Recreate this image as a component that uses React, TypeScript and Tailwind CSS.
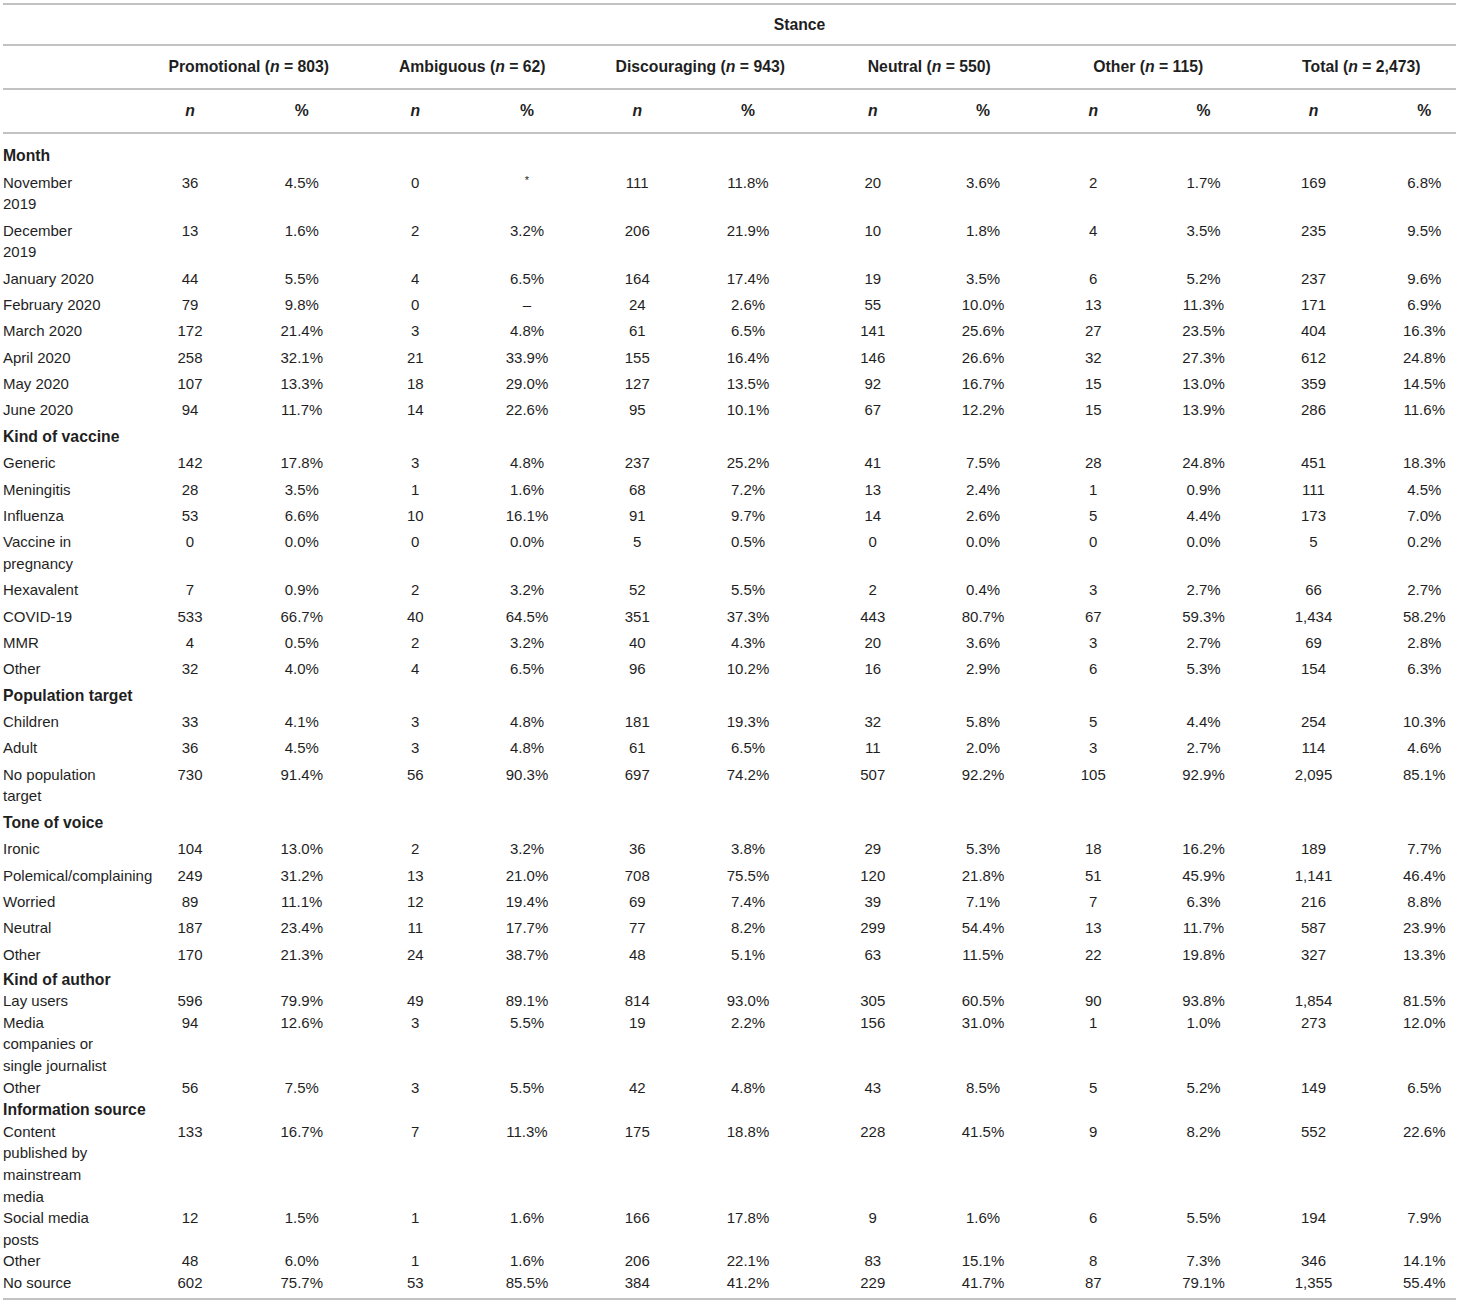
type Row = { label: string; vals: string[]; nowrap?: boolean };
type Section = { title: string; compact?: boolean; rows: Row[] };

const r = (label: string, s: string, nowrap?: boolean): Row => ({ label, vals: s.split(" "), nowrap });

const sections: Section[] = [
  {
    title: "Month",
    rows: [
      r("November 2019", "36 4.5% 0 * 111 11.8% 20 3.6% 2 1.7% 169 6.8%"),
      r("December 2019", "13 1.6% 2 3.2% 206 21.9% 10 1.8% 4 3.5% 235 9.5%"),
      r("January 2020", "44 5.5% 4 6.5% 164 17.4% 19 3.5% 6 5.2% 237 9.6%"),
      r("February 2020", "79 9.8% 0 – 24 2.6% 55 10.0% 13 11.3% 171 6.9%"),
      r("March 2020", "172 21.4% 3 4.8% 61 6.5% 141 25.6% 27 23.5% 404 16.3%"),
      r("April 2020", "258 32.1% 21 33.9% 155 16.4% 146 26.6% 32 27.3% 612 24.8%"),
      r("May 2020", "107 13.3% 18 29.0% 127 13.5% 92 16.7% 15 13.0% 359 14.5%"),
      r("June 2020", "94 11.7% 14 22.6% 95 10.1% 67 12.2% 15 13.9% 286 11.6%"),
    ],
  },
  {
    title: "Kind of vaccine",
    rows: [
      r("Generic", "142 17.8% 3 4.8% 237 25.2% 41 7.5% 28 24.8% 451 18.3%"),
      r("Meningitis", "28 3.5% 1 1.6% 68 7.2% 13 2.4% 1 0.9% 111 4.5%"),
      r("Influenza", "53 6.6% 10 16.1% 91 9.7% 14 2.6% 5 4.4% 173 7.0%"),
      r("Vaccine in pregnancy", "0 0.0% 0 0.0% 5 0.5% 0 0.0% 0 0.0% 5 0.2%"),
      r("Hexavalent", "7 0.9% 2 3.2% 52 5.5% 2 0.4% 3 2.7% 66 2.7%"),
      r("COVID-19", "533 66.7% 40 64.5% 351 37.3% 443 80.7% 67 59.3% 1,434 58.2%"),
      r("MMR", "4 0.5% 2 3.2% 40 4.3% 20 3.6% 3 2.7% 69 2.8%"),
      r("Other", "32 4.0% 4 6.5% 96 10.2% 16 2.9% 6 5.3% 154 6.3%"),
    ],
  },
  {
    title: "Population target",
    rows: [
      r("Children", "33 4.1% 3 4.8% 181 19.3% 32 5.8% 5 4.4% 254 10.3%"),
      r("Adult", "36 4.5% 3 4.8% 61 6.5% 11 2.0% 3 2.7% 114 4.6%"),
      r("No population target", "730 91.4% 56 90.3% 697 74.2% 507 92.2% 105 92.9% 2,095 85.1%"),
    ],
  },
  {
    title: "Tone of voice",
    rows: [
      r("Ironic", "104 13.0% 2 3.2% 36 3.8% 29 5.3% 18 16.2% 189 7.7%"),
      r("Polemical/complaining", "249 31.2% 13 21.0% 708 75.5% 120 21.8% 51 45.9% 1,141 46.4%", true),
      r("Worried", "89 11.1% 12 19.4% 69 7.4% 39 7.1% 7 6.3% 216 8.8%"),
      r("Neutral", "187 23.4% 11 17.7% 77 8.2% 299 54.4% 13 11.7% 587 23.9%"),
      r("Other", "170 21.3% 24 38.7% 48 5.1% 63 11.5% 22 19.8% 327 13.3%"),
    ],
  },
  {
    title: "Kind of author",
    compact: true,
    rows: [
      r("Lay users", "596 79.9% 49 89.1% 814 93.0% 305 60.5% 90 93.8% 1,854 81.5%"),
      r("Media companies or single journalist", "94 12.6% 3 5.5% 19 2.2% 156 31.0% 1 1.0% 273 12.0%"),
      r("Other", "56 7.5% 3 5.5% 42 4.8% 43 8.5% 5 5.2% 149 6.5%"),
    ],
  },
  {
    title: "Information source",
    compact: true,
    rows: [
      r("Content published by mainstream media", "133 16.7% 7 11.3% 175 18.8% 228 41.5% 9 8.2% 552 22.6%"),
      r("Social media posts", "12 1.5% 1 1.6% 166 17.8% 9 1.6% 6 5.5% 194 7.9%"),
      r("Other", "48 6.0% 1 1.6% 206 22.1% 83 15.1% 8 7.3% 346 14.1%"),
      r("No source", "602 75.7% 53 85.5% 384 41.2% 229 41.7% 87 79.1% 1,355 55.4%"),
    ],
  },
];

const groups = [
  { name: "Promotional", n: "803", cls: "pl-1" },
  { name: "Ambiguous", n: "62", cls: "pl-1" },
  { name: "Discouraging", n: "943", cls: "pl-2" },
  { name: "Neutral", n: "550", cls: "pl-[10px]" },
  { name: "Other", n: "115", cls: "" },
  { name: "Total", n: "2,473", cls: "pl-2" },
];

// nudges so numbers sit where the source columns put them
const colCls = ["", "", "", "", "", "pr-[7px]", "pl-[7px]", "", "", "", "", "pl-6"];
const colW = [
  "w-[110px]", "w-[113.5px]", "w-[113.5px]", "w-[110px]", "w-[110.5px]", "w-[118px]",
  "w-[117.5px]", "w-[110px]", "w-[110.5px]", "w-[110px]", "w-[110px]", "w-[87.5px]",
];

const line = "border-[#c2c2c2]";

function Cell({ v, i, pad }: { v: string; i: number; pad: string }) {
  return (
    <td className={`align-top text-center ${pad} ${colCls[i]}`}>
      {v === "*" ? <span className="text-[11px] leading-none relative -top-[4px]">*</span> : v}
    </td>
  );
}

export default function App() {
  const body: React.ReactNode[] = [];
  sections.forEach((sec, si) => {
    const first = si === 0;
    const pad = sec.compact ? "py-0" : "py-[2.4px]";
    const headPad = first ? "pt-[11.2px] pb-[2.4px]" : sec.compact ? "pt-px pb-0" : "py-[2.4px]";
    body.push(
      <tr key={sec.title}>
        <td className={`align-top font-bold text-[15.75px] whitespace-nowrap ${headPad}`}>{sec.title}</td>
        <td colSpan={12} className={headPad}></td>
      </tr>
    );
    sec.rows.forEach((row, ri) => {
      const last = si === sections.length - 1 && ri === sec.rows.length - 1;
      const p = last ? `pt-0 pb-[4px] border-b-2 ${line}` : pad;
      body.push(
        <tr key={`${sec.title}-${ri}`}>
          <td className={`align-top pr-[27px] ${row.nowrap ? "whitespace-nowrap" : ""} ${p}`}>{row.label}</td>
          {row.vals.map((v, i) => (
            <Cell key={i} v={v} i={i} pad={p} />
          ))}
        </tr>
      );
    });
  });

  return (
    <div className="bg-white min-h-[1304px] w-[1460px] pt-[3px] pl-[3px] font-['Liberation_Sans',Arial,sans-serif] text-[15px] leading-[21.6px] text-[#1f1f1f]">
      <table className="table-fixed border-separate border-spacing-0 w-[1453px]">
        <colgroup>
          <col className="w-[132px]" />
          {colW.map((w, i) => (
            <col key={i} className={w} />
          ))}
        </colgroup>
        <thead>
          <tr>
            <th className={`border-t-2 border-b-2 ${line} py-[9px] leading-[21px]`}></th>
            <th colSpan={12} className={`border-t-2 border-b-2 ${line} py-[9px] leading-[21px] text-center font-bold text-[15.75px] pl-2`}>
              Stance
            </th>
          </tr>
          <tr>
            <th className={`border-b-2 ${line} py-[10px] leading-[22px]`}></th>
            {groups.map((g) => (
              <th
                key={g.name}
                colSpan={2}
                className={`border-b-2 ${line} py-[10px] leading-[22px] text-center font-bold text-[15.75px] whitespace-nowrap ${g.cls}`}
              >
                {g.name} (<i>n</i> = {g.n})
              </th>
            ))}
          </tr>
          <tr>
            <th className={`border-b-2 ${line} py-[10px] leading-[22px]`}></th>
            {colW.map((_, i) => (
              <th
                key={i}
                className={`border-b-2 ${line} py-[10px] leading-[22px] text-center font-bold text-[15.75px] ${colCls[i]}`}
              >
                {i % 2 === 0 ? <i>n</i> : "%"}
              </th>
            ))}
          </tr>
        </thead>
        <tbody>{body}</tbody>
      </table>
    </div>
  );
}
